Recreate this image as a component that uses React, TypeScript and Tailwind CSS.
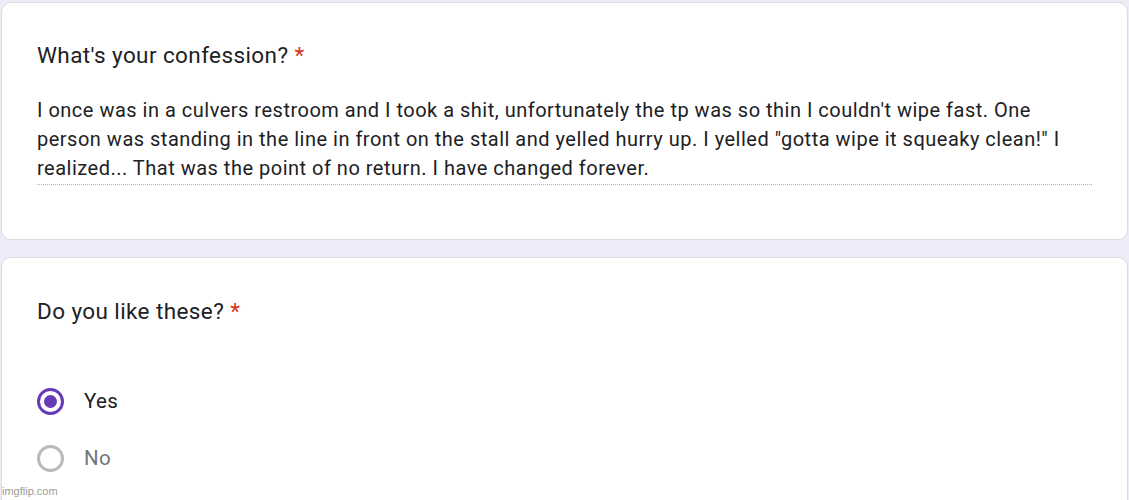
export default function App() {
  return (
    <div className="relative h-[500px] overflow-hidden bg-[#f0ebf8] pt-[2px] px-[1px] font-['Roboto',sans-serif]">
      <div className="rounded-[10px] border border-[#dadce0] bg-white px-[35px] pt-[36px] pb-[54px]">
        <div className="text-[22.5px] leading-[32px] tracking-[0.4px] text-[#202124]">
          What's your confession?<span className="ml-[6px] text-[#d93025]">*</span>
        </div>
        <div className="mt-[25px] border-b border-dotted border-[#b0b4b8] pb-[1px]">
          <p className="pr-[5px] text-[20px] leading-[29px] tracking-[0.5px] text-[#202124]">
            I once was in a culvers restroom and I took a shit, unfortunately the tp was so thin I couldn't wipe fast. One
            person was standing in the line in front on the stall and yelled hurry up. I yelled "gotta wipe it squeaky clean!" I
            realized... That was the point of no return. I have changed forever.
          </p>
        </div>
      </div>

      <div className="mt-[17px] rounded-[10px] border border-[#dadce0] bg-white px-[35px] pt-[37px] pb-[40px]">
        <div className="text-[22.5px] leading-[32px] tracking-[0.4px] text-[#202124]">
          Do you like these?<span className="ml-[6px] text-[#d93025]">*</span>
        </div>
        <div className="mt-[45px] flex flex-col">
          <label className="flex h-[58px] items-center gap-[20px]">
            <span className="flex h-[27px] w-[27px] items-center justify-center rounded-full border-[3px] border-[#673ab7]">
              <span className="h-[13px] w-[13px] rounded-full bg-[#673ab7]" />
            </span>
            <span className="text-[20.5px] tracking-[0.3px] text-[#202124]">Yes</span>
          </label>
          <label className="flex h-[57px] items-center gap-[20px]">
            <span className="h-[27px] w-[27px] rounded-full border-[3px] border-[#b8babe]" />
            <span className="text-[20.5px] tracking-[0.3px] text-[#70757a]">No</span>
          </label>
        </div>
      </div>

      <div className="absolute bottom-[3px] left-[2px] text-[11px] leading-[12px] text-[#9a9a9a] font-['Liberation_Sans',sans-serif]">
        imgflip.com
      </div>
    </div>
  );
}
